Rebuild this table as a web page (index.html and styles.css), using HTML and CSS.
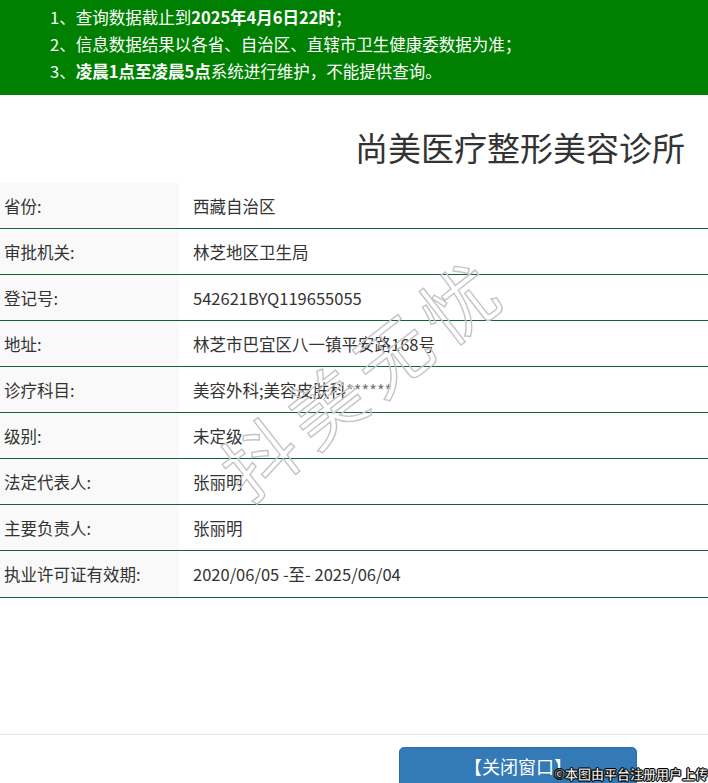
FILE: index.html
```html
<!DOCTYPE html>
<html lang="zh-CN">
<head>
<meta charset="utf-8">
<title>尚美医疗整形美容诊所</title>
<link rel="stylesheet" href="styles.css">
</head>
<body>
<div class="notice">
  <p>1、查询数据截止到<b>2025年4月6日22时</b>；</p>
  <p>2、信息数据结果以各省、自治区、直辖市卫生健康委数据为准；</p>
  <p>3、<b>凌晨1点至凌晨5点</b>系统进行维护，不能提供查询。</p>
</div>
<div class="main">
  <h1 class="title">尚美医疗整形美容诊所</h1>
  <table class="info">
    <tr><td class="label">省份:</td><td class="value">西藏自治区</td></tr>
    <tr><td class="label">审批机关:</td><td class="value">林芝地区卫生局</td></tr>
    <tr><td class="label">登记号:</td><td class="value">542621BYQ119655055</td></tr>
    <tr><td class="label">地址:</td><td class="value">林芝市巴宜区八一镇平安路168号</td></tr>
    <tr><td class="label">诊疗科目:</td><td class="value">美容外科;美容皮肤科<span class="stars">******</span></td></tr>
    <tr><td class="label">级别:</td><td class="value">未定级</td></tr>
    <tr><td class="label">法定代表人:</td><td class="value">张丽明</td></tr>
    <tr><td class="label">主要负责人:</td><td class="value">张丽明</td></tr>
    <tr><td class="label">执业许可证有效期:</td><td class="value">2020/06/05 -至- 2025/06/04</td></tr>
  </table>
  <div class="watermark">抖美无忧</div>
</div>
<div class="footer">
  <button class="btn-close" type="button">【关闭窗口】</button>
</div>
<div class="credit">©本图由平台注册用户上传</div>
</body>
</html>
```
FILE: styles.css
```css
html, body {
  margin: 0;
  padding: 0;
  background: #fff;
}
body {
  width: 708px;
  height: 783px;
  overflow: hidden;
  position: relative;
  font-family: "Microsoft YaHei", "Noto Sans CJK SC", "Noto Sans", sans-serif;
  color: #333;
}
.notice {
  background: #008000;
  color: #fff;
  font-size: 16.5px;
  line-height: 27px;
  padding: 4px 0 10px 50px;
  height: 81px;
}
.notice p {
  margin: 0;
  white-space: nowrap;
}
.notice b {
  font-weight: bold;
}
.main {
  position: relative;
}
.title {
  margin: 0;
  padding: 30px 23px 0 0;
  text-align: right;
  font-size: 33px;
  font-weight: normal;
  line-height: 44px;
  height: 44px;
  color: #333;
}
.info {
  margin-top: 14px;
  width: 100%;
  border-collapse: collapse;
  font-size: 16.5px;
}
.info td {
  height: 45px;
  padding: 0;
  border-bottom: 1px solid #146432;
  vertical-align: middle;
  white-space: nowrap;
}
.info tr:last-child td {
  height: 46px;
}
.info .label {
  width: 175px;
  padding-left: 4px;
  background: #f9f9f9;
}
.info .value {
  padding-left: 14px;
}
.stars {
  color: #777;
}
.watermark {
  position: absolute;
  left: 185px;
  top: 245px;
  width: 340px;
  text-align: center;
  font-size: 74px;
  line-height: 80px;
  font-weight: normal;
  letter-spacing: 10px;
  text-indent: 10px;
  color: transparent;
  -webkit-text-stroke: 1.4px #c4c4c4;
  transform: rotate(-38deg);
  white-space: nowrap;
  pointer-events: none;
}
.footer {
  position: absolute;
  left: 0;
  right: 0;
  top: 734px;
  border-top: 1px solid #e5e5e5;
  padding-top: 12px;
}
.btn-close {
  margin-left: 399px;
  width: 238px;
  height: 44px;
  background: #337ab7;
  border: 1px solid #2e6da4;
  border-radius: 5px;
  color: #fff;
  font-family: "Microsoft YaHei", "Noto Sans CJK SC", sans-serif;
  font-size: 18px;
  font-weight: normal;
  line-height: 24px;
  padding: 6px 0 12px;
  text-align: center;
}
.credit {
  position: absolute;
  right: 0;
  bottom: 0;
  font-size: 13px;
  line-height: 18px;
  font-weight: bold;
  color: #fff;
  -webkit-text-stroke: 0.4px #000;
  text-shadow: 0 0 1px #000, 0 0 1px #000, 1px 0 0 #000, -1px 0 0 #000, 0 1px 0 #000, 0 -1px 0 #000;
  white-space: nowrap;
}
```
